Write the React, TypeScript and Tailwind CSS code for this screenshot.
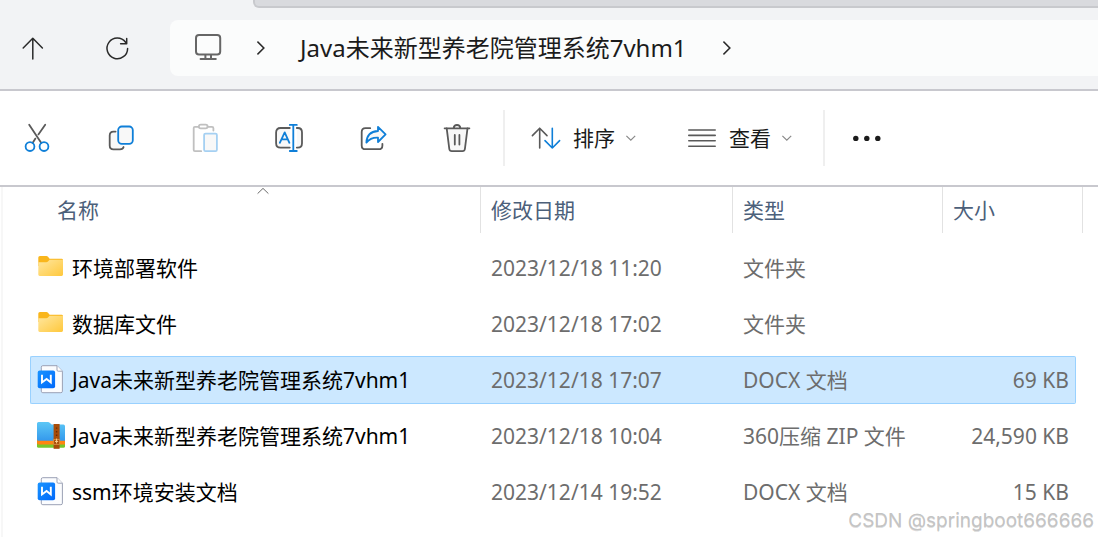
import type { ReactNode } from "react";

type FileKind = "folder" | "docx" | "zip";

type FileRow = {
  name: string;
  date: string;
  type: string;
  size: string;
  kind: FileKind;
  selected?: boolean;
};

const files: FileRow[] = [
  { name: "环境部署软件", date: "2023/12/18 11:20", type: "文件夹", size: "", kind: "folder" },
  { name: "数据库文件", date: "2023/12/18 17:02", type: "文件夹", size: "", kind: "folder" },
  {
    name: "Java未来新型养老院管理系统7vhm1",
    date: "2023/12/18 17:07",
    type: "DOCX 文档",
    size: "69 KB",
    kind: "docx",
    selected: true,
  },
  {
    name: "Java未来新型养老院管理系统7vhm1",
    date: "2023/12/18 10:04",
    type: "360压缩 ZIP 文件",
    size: "24,590 KB",
    kind: "zip",
  },
  { name: "ssm环境安装文档", date: "2023/12/14 19:52", type: "DOCX 文档", size: "15 KB", kind: "docx" },
];

const BLUE = "#0f7fd8";
const GRAY = "#5a5a5a";

function Icon({ children, width = 1.8 }: { children: ReactNode; width?: number }) {
  return (
    <svg
      viewBox="0 0 28 28"
      className="h-7 w-7 shrink-0 overflow-visible"
      fill="none"
      stroke={GRAY}
      strokeWidth={width}
      strokeLinecap="round"
      strokeLinejoin="round"
      aria-hidden="true"
    >
      {children}
    </svg>
  );
}

function Caret() {
  return (
    <svg viewBox="0 0 12 12" className="h-3 w-3 shrink-0" fill="none" stroke="#8a8a8a" strokeWidth="1.2" aria-hidden="true">
      <path d="M1.4 3.8 5.8 8.2 10.2 3.8" />
    </svg>
  );
}

function PathArrow() {
  return (
    <svg viewBox="0 0 8 16" className="h-4 w-2 shrink-0" fill="none" stroke="#2a2a2a" strokeWidth="1.6" aria-hidden="true">
      <path d="M.4 1.5 6.8 8 .4 14.5" />
    </svg>
  );
}

const tools = [
  {
    label: "剪切",
    icon: (
      <Icon>
        <path d="M6.2.8 18.3 19M22.2.8 15.4 10.4M12.4 14.6 9.6 19" />
        <g stroke={BLUE}>
          <circle cx="7" cy="22.6" r="4.4" />
          <circle cx="21" cy="22.6" r="4.4" />
        </g>
      </Icon>
    ),
  },
  {
    label: "复制",
    icon: (
      <Icon>
        <path d="M8.6 7.6H6.5Q2.7 7.6 2.7 11.4V21.5Q2.7 25.3 6.5 25.3H13Q16 25.3 16.6 23" fill="#f8f8f8" />
        <rect x="11.2" y="2.5" width="14.6" height="17.4" rx="3.6" stroke={BLUE} fill="#f8f8f8" />
      </Icon>
    ),
  },
  {
    label: "粘贴",
    disabled: true,
    icon: (
      <Icon>
        <g stroke="#c0c0c0">
          <path d="M7.6 2.9H3.9Q2.7 2.9 2.7 4.1V26Q2.7 27.2 3.9 27.2H10.2M16.6 2.9H21Q22.4 2.9 22.4 4.3V6.6" />
          <rect x="7.8" y=".6" width="8.8" height="3.8" rx="1.9" />
        </g>
        <rect x="13.1" y="9.6" width="12.8" height="17.6" rx="1.4" stroke="#a5d0f2" fill="#f8f8f8" />
      </Icon>
    ),
  },
  {
    label: "重命名",
    icon: (
      <Icon>
        <path d="M14.8 4H5.5Q1.1 4 1.1 8.4V19.2Q1.1 23.6 5.5 23.6H14.8M21.8 4H22.8Q27 4 27 8.4V19.2Q27 23.6 22.8 23.6H21.8" fill="#f8f8f8" />
        <path d="M18.3.9V27M14.8.9H21.8M14.8 27H21.8M4.8 18.8 9.7 8.4 14.4 18.8M6.6 15.4H12.8" stroke={BLUE} />
      </Icon>
    ),
  },
  {
    label: "共享",
    icon: (
      <Icon>
        <path d="M11.2 4.2H6.5Q2.7 4.2 2.7 8V21.4Q2.7 25.2 6.5 25.2H19.6Q23.4 25.2 23.4 21.4V19.8" />
        <path d="M19 2.8 26.6 10.4 19 18V13.6Q11.6 13.2 7.4 18.6 7.8 7.6 19 7Z" stroke={BLUE} fill="#f8f8f8" />
      </Icon>
    ),
  },
  {
    label: "删除",
    icon: (
      <Icon>
        <path d="M3.7 4.4 6.3 25Q6.6 27.2 8.8 27.2H19.4Q21.6 27.2 21.9 25L24.5 4.4" fill="#f8f8f8" />
        <path d="M1.6 4.3H26.4M10.6 4.1Q11 1 14 1T17.4 4.1M11.8 11V20.6M16.4 11V20.6" />
      </Icon>
    ),
  },
];

function FolderIcon() {
  return (
    <svg viewBox="0 0 28 28" className="h-7 w-7 shrink-0" aria-hidden="true">
      <defs>
        <linearGradient id="folder" x1="0" y1="0" x2="1" y2="1">
          <stop offset="0" stopColor="#ffe7a0" />
          <stop offset="1" stopColor="#ffc83c" />
        </linearGradient>
      </defs>
      <path d="M2.3 3.6Q2.3 2 3.9 2H10.4Q11.4 2 12 2.8L13.6 4.8H25.6Q27 4.8 27 6.2V12H2.3Z" fill="#f9b61c" />
      <path d="M2.3 8.2H10.2Q11.4 8.2 12.2 7.3L13.6 5.8H27V20.6Q27 22 25.6 22H3.7Q2.3 22 2.3 20.6Z" fill="url(#folder)" />
    </svg>
  );
}

function WordIcon() {
  return (
    <svg viewBox="0 0 28 28" className="h-7 w-7 shrink-0 overflow-visible" aria-hidden="true">
      <defs>
        <linearGradient id="word" x1="0" y1="0" x2="1" y2="1">
          <stop offset="0" stopColor="#1a94ff" />
          <stop offset="1" stopColor="#0068fa" />
        </linearGradient>
      </defs>
      <path d="M6.8-.3H21L26.4 5.2V25.2Q26.4 26.7 24.9 26.7H6.8Q5.3 26.7 5.3 25.2V1.2Q5.3-.3 6.8-.3Z" fill="#fbfcfe" stroke="#9ba1b5" />
      <path d="M21-.3V4Q21 5.2 22.2 5.2H26.4" fill="#fff" stroke="#9ba1b5" />
      <rect x="1.7" y="4.4" width="17.4" height="17.8" rx="2" fill="url(#word)" />
      <path d="M6 8.8V16.4L10.6 13 14.8 16.4V8.8" fill="none" stroke="#fff" strokeWidth="1.9" />
    </svg>
  );
}

function ZipIcon() {
  return (
    <svg viewBox="0 0 28 28" className="h-7 w-7 shrink-0 overflow-visible" aria-hidden="true">
      <defs>
        <linearGradient id="zip" x1="0" y1="0" x2="0" y2="1">
          <stop offset="0" stopColor="#5cc7f6" />
          <stop offset="1" stopColor="#3499ec" />
        </linearGradient>
      </defs>
      <path d="M1 19H29V24.2Q29 25.8 27.4 25.8H2.6Q1 25.8 1 24.2Z" fill="#78c62c" />
      <path d="M1 17H29V22.4H2.6Q1 22.4 1 20.8Z" fill="#ff8410" />
      <path d="M1 1.6Q1 0 2.6 0H12Q13 0 13.7.7L15.6 2.6H27.4Q29 2.6 29 4.2V18.8H2.6Q1 18.8 1 17.2Z" fill="url(#zip)" />
      <rect x="17.6" y="2" width="6" height="24.8" fill="#a84c08" />
      <path d="M20.6 5.4V16" stroke="#6b2a04" strokeWidth="1.4" strokeDasharray="1.4 2.2" />
      <path d="M17.6 17.4H23.6V22.4H17.6Z" fill="#a84c08" stroke="#e09a4c" strokeWidth=".8" />
      <path d="M20.6 16.6V21.4M19 19.4H22.2" stroke="#ffd08a" strokeWidth="1" />
    </svg>
  );
}

function FileIcon({ kind }: { kind: FileKind }) {
  if (kind === "folder") return <FolderIcon />;
  if (kind === "docx") return <WordIcon />;
  return <ZipIcon />;
}

function AddressBar() {
  return (
    <header className="bg-[#f2f3f5] border-b-2 border-[#c8c8ce]">
      {/* bottom edge of the tab strip */}
      <div className="ml-[253px] h-2 rounded-bl-md border-b-2 border-l-2 border-[#c8c9cd] bg-[#d9dade]" />

      <div className="mt-3 flex items-center pb-[13px] pl-[19px]">
        <div className="flex gap-14">
          <button type="button" aria-label="向上">
            <Icon width={1.5}>
              <path d="M13.8 25V4.2M4.2 14 13.8 4.2 23.4 14" stroke="#2a2a2a" />
            </Icon>
          </button>
          <button type="button" aria-label="刷新">
            <Icon width={1.5}>
              <path d="M24.6 14.4A10.3 10.3 0 1 1 22.6 8.3L23.6 9.6M23.7 4.4V9.7H17.6" stroke="#2a2a2a" />
            </Icon>
          </button>
        </div>

        <nav className="ml-[39px] flex h-14 flex-1 items-center rounded-l-lg bg-[#fbfcfc] pl-6">
          <button type="button" aria-label="此电脑">
            <Icon width={2}>
              <rect x="2" y="1" width="24.2" height="19.4" rx="3" stroke="#666" />
              <path d="M11.4 21V24.6M17 21V24.6M6.6 25H21.8" stroke="#666" />
            </Icon>
          </button>
          <div className="ml-[35px]">
            <PathArrow />
          </div>
          <button type="button" className="ml-[35px] mr-9 whitespace-nowrap text-2xl text-[#1b1b1b]">
            Java未来新型养老院管理系统7vhm1
          </button>
          <PathArrow />
        </nav>
      </div>
    </header>
  );
}

function Toolbar() {
  return (
    <div className="flex h-24 items-center border-b-2 border-[#c8c8ce] pl-[23px] text-[21px] text-[#1b1b1b]">
      <div className="flex gap-14">
        {tools.map((tool) => (
          <button key={tool.label} type="button" aria-label={tool.label} disabled={tool.disabled}>
            {tool.icon}
          </button>
        ))}
      </div>

      <div className="ml-8 h-14 w-0.5 bg-[#efefef]" />

      <button type="button" className="ml-[27px] flex items-center">
        <Icon width={1.6}>
          <path d="M7.7 24V4.2M.4 11.6 7.7 4.2 15 11.6" />
          <path d="M20.3 4.2V24M13 16.6 20.3 24 27.6 16.6" stroke={BLUE} />
        </Icon>
        <span className="ml-[13px] mr-2.5 pt-0.5">排序</span>
        <Caret />
      </button>

      <button type="button" className="ml-[51px] flex items-center">
        <Icon width={1.6}>
          <path d="M.8 6H27.2M.8 11.4H27.2M.8 16.8H27.2M.8 22.2H27.2" />
        </Icon>
        <span className="ml-[13px] mr-2.5 pt-0.5">查看</span>
        <Caret />
      </button>

      <div className="ml-[30px] h-14 w-0.5 bg-[#efefef]" />

      <button type="button" aria-label="更多" className="ml-7">
        <Icon>
          <g fill="#1b1b1b" stroke="none">
            <circle cx="2.8" cy="14.4" r="2.7" />
            <circle cx="13.8" cy="14.4" r="2.7" />
            <circle cx="24.8" cy="14.4" r="2.7" />
          </g>
        </Icon>
      </button>
    </div>
  );
}

function FileTable() {
  const head = "flex h-[46px] items-center border-r border-[#e2e2e2] pt-0.5";

  return (
    <table className="w-full table-fixed border-separate border-spacing-0 text-left text-[21px] text-[#6d6d6d]">
      <colgroup>
        <col />
        <col className="w-[252px]" />
        <col className="w-[210px]" />
        <col className="w-[140px]" />
      </colgroup>
      <thead className="text-[#4c607a]">
        <tr>
          <th scope="col" className="relative p-0 pb-[7px] font-normal">
            <div className={`${head} pl-[27px]`}>名称</div>
            <svg
              viewBox="0 0 12 8"
              className="absolute left-[227px] top-0 h-2 w-3"
              fill="none"
              stroke="#6a6a6a"
              aria-hidden="true"
            >
              <path d="M.6 6.6 6 1.4 11.4 6.6" />
            </svg>
          </th>
          <th scope="col" className="p-0 pb-[7px] font-normal">
            <div className={`${head} pl-2.5`}>修改日期</div>
          </th>
          <th scope="col" className="p-0 pb-[7px] font-normal">
            <div className={`${head} pl-2.5`}>类型</div>
          </th>
          <th scope="col" className="p-0 pb-[7px] font-normal">
            <div className={`${head} pl-2.5`}>大小</div>
          </th>
        </tr>
      </thead>
      <tbody>
        {files.map((file) => {
          const cell = file.selected
            ? "flex h-12 items-center whitespace-nowrap border-y border-[#99d1ff] bg-[#cce8ff]"
            : "flex h-12 items-center whitespace-nowrap border-y border-transparent";
          const first = file.selected ? "rounded-l-xs border-l" : "border-l";
          const last = file.selected ? "rounded-r-xs border-r" : "border-r";

          return (
            <tr key={file.date}>
              <td className="p-0 py-1">
                <div className={`${cell} ${first} gap-2 pl-[5px] text-black`}>
                  <FileIcon kind={file.kind} />
                  <span className="pt-0.5">{file.name}</span>
                </div>
              </td>
              <td className="p-0 py-1">
                <div className={`${cell} pl-2.5 pt-0.5`}>{file.date}</div>
              </td>
              <td className="p-0 py-1">
                <div className={`${cell} pl-2.5 pt-0.5`}>{file.type}</div>
              </td>
              <td className="p-0 py-1 pr-[7px]">
                <div className={`${cell} ${last} justify-end pr-1.5 pt-0.5`}>{file.size}</div>
              </td>
            </tr>
          );
        })}
      </tbody>
    </table>
  );
}

export default function App() {
  return (
    <div className="relative flex min-h-screen flex-col bg-white font-['Noto_Sans','Noto_Sans_CJK_SC',sans-serif]">
      <AddressBar />
      <Toolbar />
      <main className="ml-px flex-1 border-l-2 border-[#f7f7f7] pl-[27px] pr-[15px]">
        <FileTable />
      </main>
      <div className="absolute bottom-0 right-1 font-['Inter',sans-serif] text-[19px] leading-8 text-[#c4c4c4] text-shadow-2xs">
        CSDN @springboot666666
      </div>
    </div>
  );
}
